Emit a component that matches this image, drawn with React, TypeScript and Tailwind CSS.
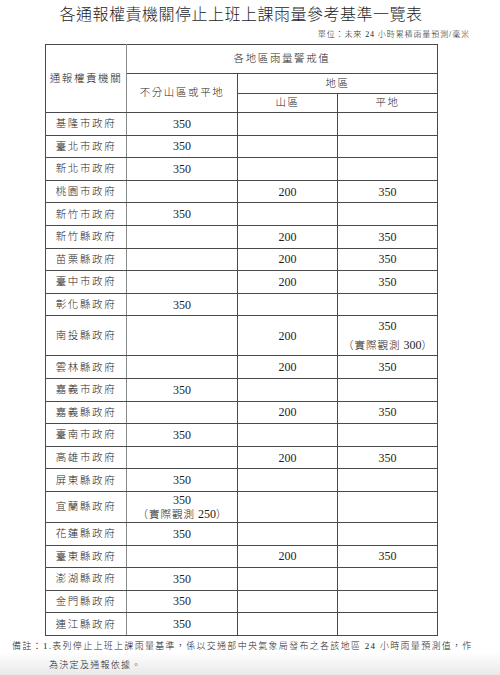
import React from 'react';

type Row = {
    name: string;
    all?: string;
    mountain?: string;
    plain?: string;
    note?: string;
    noteCol?: 'all' | 'plain';
    tall?: 'lg' | 'md';
};

const rows: Row[] = [
    {name: '基隆市政府', all: '350'},
    {name: '臺北市政府', all: '350'},
    {name: '新北市政府', all: '350'},
    {name: '桃園市政府', mountain: '200', plain: '350'},
    {name: '新竹市政府', all: '350'},
    {name: '新竹縣政府', mountain: '200', plain: '350'},
    {name: '苗栗縣政府', mountain: '200', plain: '350'},
    {name: '臺中市政府', mountain: '200', plain: '350'},
    {name: '彰化縣政府', all: '350'},
    {name: '南投縣政府', mountain: '200', plain: '350', note: '300', noteCol: 'plain', tall: 'lg'},
    {name: '雲林縣政府', mountain: '200', plain: '350'},
    {name: '嘉義市政府', all: '350'},
    {name: '嘉義縣政府', mountain: '200', plain: '350'},
    {name: '臺南市政府', all: '350'},
    {name: '高雄市政府', mountain: '200', plain: '350'},
    {name: '屏東縣政府', all: '350'},
    {name: '宜蘭縣政府', all: '350', note: '250', noteCol: 'all', tall: 'md'},
    {name: '花蓮縣政府', all: '350'},
    {name: '臺東縣政府', mountain: '200', plain: '350'},
    {name: '澎湖縣政府', all: '350'},
    {name: '金門縣政府', all: '350'},
    {name: '連江縣政府', all: '350'},
];

const cell = 'border border-[#4a4a4a] text-center align-middle p-0 leading-[14px]';
const num = 'text-[12px]';
const cjk = 'text-[10.5px] tracking-[1.6px] font-light';

function Value({value, note, tall}: {value?: string; note?: string; tall?: Row['tall']}) {
    if (!value) return null;
    if (!note) return <span>{value}</span>;
    return (
        <div className={tall === 'lg' ? 'leading-[19px] pt-[1px]' : 'leading-[14px] pt-[1px]'}>
            <div>{value}</div>
            <div className="whitespace-nowrap">
                <span className="text-[10.5px] tracking-[1px] font-light">（實際觀測</span> {note}
                <span className="text-[10.5px] font-light">）</span>
            </div>
        </div>
    );
}

export default function App() {
    return (
        <div
            className="w-[500px] h-[675px] overflow-hidden text-[#1e1e1e] bg-[linear-gradient(to_bottom,#ffffff_0px,#ffffff_652px,#e9e9e9_675px)]"
            style={{fontFamily: '"Liberation Serif", "Noto Sans CJK TC", serif'}}>
            <div className="pt-[5px] pl-[45px] w-[437px] text-center">
                <h1 className="text-[16px] leading-[20px] tracking-[0.5px] font-light whitespace-nowrap">
                    各通報權責機關停止上班上課雨量參考基準一覽表
                </h1>
            </div>
            <div className="mt-[5px] pr-[30px] text-right text-[8px] leading-[10px] tracking-[0.9px] font-light">
                單位：未來 24 小時累積雨量預測/毫米
            </div>

            <table className="ml-[45px] mt-[4px] w-[392px] table-fixed border-collapse">
                <colgroup>
                    <col className="w-[81px]"/>
                    <col className="w-[111px]"/>
                    <col className="w-[100px]"/>
                    <col className="w-[100px]"/>
                </colgroup>
                <thead>
                    <tr className="h-[29px]">
                        <th rowSpan={3} className={`${cell} ${cjk} border-r-[#8a8a8a] border-r-[1.5px]`}>
                            通報權責機關
                        </th>
                        <th colSpan={3} className={`${cell} ${cjk}`}>各地區雨量警戒值</th>
                    </tr>
                    <tr className="h-[20px]">
                        <th rowSpan={2} className={`${cell} ${cjk}`}>不分山區或平地</th>
                        <th colSpan={2} className={`${cell} ${cjk}`}>地區</th>
                    </tr>
                    <tr className="h-[19px]">
                        <th className={`${cell} ${cjk}`}>山區</th>
                        <th className={`${cell} ${cjk}`}>平地</th>
                    </tr>
                </thead>
                <tbody>
                    {rows.map((r) => (
                        <tr
                            key={r.name}
                            className={r.tall === 'lg' ? 'h-[38.4px]' : r.tall === 'md' ? 'h-[30px]' : 'h-[22.6px]'}>
                            <td className={`${cell} ${cjk} pt-[1px] border-r-[#8a8a8a] border-r-[1.5px]`}>{r.name}</td>
                            <td className={`${cell} ${num}`}>
                                <Value value={r.all} note={r.noteCol === 'all' ? r.note : undefined} tall={r.tall}/>
                            </td>
                            <td className={`${cell} ${num}`}>
                                <Value value={r.mountain}/>
                            </td>
                            <td className={`${cell} ${num}`}>
                                <Value value={r.plain} note={r.noteCol === 'plain' ? r.note : undefined} tall={r.tall}/>
                            </td>
                        </tr>
                    ))}
                </tbody>
            </table>

            <div className="pl-[12px] mt-[1px] text-[9px] tracking-[1.3px] leading-[19px] whitespace-nowrap font-light">
                <div>備註：1.表列停止上班上課雨量基準，係以交通部中央氣象局發布之各該地區 24 小時雨量預測值，作</div>
                <div className="pl-[37px]">為決定及通報依據。</div>
            </div>
        </div>
    );
}
